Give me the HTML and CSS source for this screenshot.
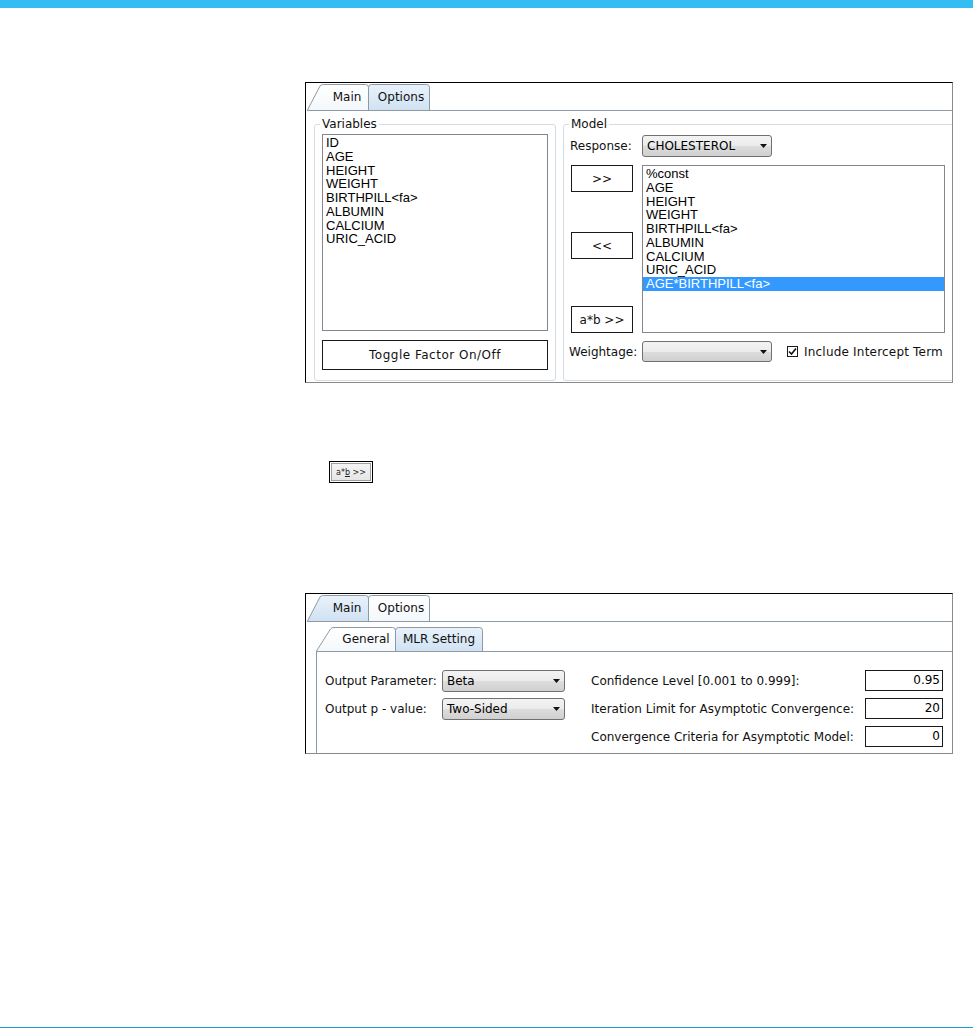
FILE: index.html
```html
<!DOCTYPE html>
<html>
<head>
<meta charset="utf-8">
<title>Model dialog</title>
<link rel="stylesheet" href="styles.css">
</head>
<body>
<svg class="defs" width="0" height="0" aria-hidden="true">
  <defs>
    <linearGradient id="gSel" x1="0" y1="0" x2="0" y2="1">
      <stop offset="0" stop-color="#ffffff"/>
      <stop offset="1" stop-color="#f4f8fc"/>
    </linearGradient>
    <linearGradient id="gTab" x1="0" y1="0" x2="0" y2="1">
      <stop offset="0" stop-color="#e9f2fb"/>
      <stop offset="1" stop-color="#d0e2f3"/>
    </linearGradient>
  </defs>
</svg>
<div class="page">
  <div class="topbar"></div>
  <main class="content">

    <section class="shot shot1">
      <div class="tabstrip">
        <div class="tab tab-first w62">
          <svg class="tabbg" width="62" height="26"><path class="sel" d="M0.5 26 L13 2 Q14 0.5 16.5 0.5 L58.5 0.5 Q61.5 0.5 61.5 3.5 L61.5 26"/></svg>
          <span class="tablabel">Main</span>
        </div>
        <div class="tab tab-next w62">
          <svg class="tabbg" width="62" height="26"><path class="unsel" d="M0.5 26 L0.5 3.5 Q0.5 0.5 3.5 0.5 L58.5 0.5 Q61.5 0.5 61.5 3.5 L61.5 26"/></svg>
          <span class="tablabel">Options</span>
        </div>
      </div>
      <div class="body1">
        <fieldset class="grp grp-vars">
          <legend class="legend">Variables</legend>
          <div class="listbox vars-list">
            <div class="item">ID</div>
            <div class="item">AGE</div>
            <div class="item">HEIGHT</div>
            <div class="item">WEIGHT</div>
            <div class="item">BIRTHPILL&lt;fa&gt;</div>
            <div class="item">ALBUMIN</div>
            <div class="item">CALCIUM</div>
            <div class="item">URIC_ACID</div>
          </div>
          <div class="btn toggle">Toggle Factor On/Off</div>
        </fieldset>
        <fieldset class="grp grp-model">
          <legend class="legend legend-model">Model</legend>
          <div class="resp-row">
            <span class="lbl lbl-resp">Response:</span>
            <div class="combo c130"><span class="ctext">CHOLESTEROL</span><svg class="arrow" width="7" height="4"><path d="M0 0 H7 L3.5 4 Z"/></svg></div>
          </div>
          <div class="mid">
            <div class="btncol">
              <div class="btn mbtn">&gt;&gt;</div>
              <div class="btn mbtn mbtn2">&lt;&lt;</div>
              <div class="btn mbtn mbtn3">a*b &gt;&gt;</div>
            </div>
            <div class="listbox model-list">
              <div class="item">%const</div>
              <div class="item">AGE</div>
              <div class="item">HEIGHT</div>
              <div class="item">WEIGHT</div>
              <div class="item">BIRTHPILL&lt;fa&gt;</div>
              <div class="item">ALBUMIN</div>
              <div class="item">CALCIUM</div>
              <div class="item">URIC_ACID</div>
              <div class="item item-sel">AGE*BIRTHPILL&lt;fa&gt;</div>
            </div>
          </div>
          <div class="weight-row">
            <span class="lbl lbl-weight">Weightage:</span>
            <div class="combo c130 ch21"><span class="ctext"></span><svg class="arrow" width="7" height="4"><path d="M0 0 H7 L3.5 4 Z"/></svg></div>
            <span class="check"><svg width="9" height="9" viewBox="0 0 9 9"><path d="M1 4.5 L3.5 7 L8 1.5" fill="none" stroke="#111" stroke-width="1.6"/></svg></span>
            <span class="lbl lbl-check">Include Intercept Term</span>
          </div>
        </fieldset>
      </div>
    </section>

    <div class="mini"><span>a*<u>b</u> &gt;&gt;</span></div>

    <section class="shot shot2">
      <div class="tabstrip">
        <div class="tab tab-first w62">
          <svg class="tabbg" width="62" height="26"><path class="unsel" d="M0.5 26 L13 2 Q14 0.5 16.5 0.5 L58.5 0.5 Q61.5 0.5 61.5 3.5 L61.5 26"/></svg>
          <span class="tablabel">Main</span>
        </div>
        <div class="tab tab-next w62">
          <svg class="tabbg" width="62" height="26"><path class="sel" d="M0.5 26 L0.5 3.5 Q0.5 0.5 3.5 0.5 L58.5 0.5 Q61.5 0.5 61.5 3.5 L61.5 26"/></svg>
          <span class="tablabel">Options</span>
        </div>
      </div>
      <div class="body2">
        <div class="tabstrip inner-strip">
          <div class="tab itab itab-first w80">
            <svg class="tabbg" width="80" height="24"><path class="sel" d="M0.5 24 L14.5 2 Q15.5 0.5 18 0.5 L76.5 0.5 Q79.5 0.5 79.5 3.5 L79.5 24"/></svg>
            <span class="tablabel">General</span>
          </div>
          <div class="tab itab tab-next w88">
            <svg class="tabbg" width="88" height="24"><path class="unsel" d="M0.5 24 L0.5 3.5 Q0.5 0.5 3.5 0.5 L84.5 0.5 Q87.5 0.5 87.5 3.5 L87.5 24"/></svg>
            <span class="tablabel">MLR Setting</span>
          </div>
        </div>
        <div class="inner-panel">
          <div class="opt-grid">
            <span class="lbl">Output Parameter:</span>
            <div class="combo c123"><span class="ctext">Beta</span><svg class="arrow" width="7" height="4"><path d="M0 0 H7 L3.5 4 Z"/></svg></div>
            <span></span>
            <span class="lbl">Confidence Level [0.001 to 0.999]:</span>
            <div class="num">0.95</div>

            <span class="lbl">Output p - value:</span>
            <div class="combo c123"><span class="ctext">Two-Sided</span><svg class="arrow" width="7" height="4"><path d="M0 0 H7 L3.5 4 Z"/></svg></div>
            <span></span>
            <span class="lbl">Iteration Limit for Asymptotic Convergence:</span>
            <div class="num">20</div>

            <span></span>
            <span></span>
            <span></span>
            <span class="lbl">Convergence Criteria for Asymptotic Model:</span>
            <div class="num">0</div>
          </div>
        </div>
      </div>
    </section>

  </main>
  <div class="footline"></div>
</div>
</body>
</html>
```

FILE: styles.css
```css
* { box-sizing: border-box; }
html, body { margin: 0; padding: 0; background: #fff; }
body {
  font-family: "DejaVu Sans", Verdana, sans-serif;
  font-size: 12px;
  color: #111;
}
.defs { position: absolute; width: 0; height: 0; }

.page {
  width: 973px;
  height: 1029px;
  display: flex;
  flex-direction: column;
  overflow: hidden;
}
.topbar { flex: none; height: 8px; background: #33bdf2; }
.content {
  flex: 1;
  display: flex;
  flex-direction: column;
  align-items: flex-start;
  padding-left: 305px;
}
.footline { flex: none; height: 1px; margin-bottom: 1px; background: #1a9bd0; }

/* screenshot frame */
.shot {
  width: 648px;
  background: #fff;
  border: 1px solid #8a8a8a;
  border-top-color: #000;
  border-left-color: #000;
  padding: 1px 0 0 1px;
  overflow: hidden;
  display: flex;
  flex-direction: column;
}
.shot1 { margin-top: 74px; height: 301px; }
.shot2 { margin-top: 110px; height: 161px; }

/* tabs */
.tabstrip {
  flex: none;
  display: flex;
  align-items: flex-end;
  height: 27px;
  border-bottom: 1px solid #8d9aa5;
}
.tab {
  position: relative;
  height: 26px;
  display: flex;
  align-items: center;
  justify-content: center;
}
.tab-next { margin-left: -1px; }
.w62 { width: 62px; }
.w80 { width: 80px; }
.w88 { width: 88px; }
.tab-first { padding-left: 18px; }
.tab-first + .tab-next { padding-left: 4px; }
.tabbg { position: absolute; left: 0; top: 0; }
.tabbg path { stroke: #8d9aa5; stroke-width: 1; }
.tabbg path.sel { fill: url(#gSel); }
.tabbg path.unsel { fill: url(#gTab); }
.tablabel { position: relative; white-space: nowrap; color: #111; }

/* body of panel 1 */
.body1 {
  flex: 1;
  display: flex;
  gap: 7px;
  padding: 6px 0 1px 7px;
  min-height: 0;
}
.grp {
  margin: 0;
  min-width: 0;
  border: 1px solid #d3dde5;
  border-radius: 3px;
  padding: 3px 7px 0 7px;
}
.grp-vars { width: 242px; flex: none; }
.grp-model { flex: 1; margin-right: -8px; padding-left: 6px; }
.legend {
  padding: 0 2px;
  margin-left: -2px;
  line-height: 14px;
  font-size: 12px;
  color: #111;
}
.legend-model { margin-left: -1px; }

.listbox {
  border: 1px solid #82878f;
  background: #fff;
  padding: 1px 0 0 0;
  font-family: "Liberation Sans", Arial, sans-serif;
  font-size: 13px;
  color: #000;
  overflow: hidden;
}
.item { line-height: 13.75px; height: 13.75px; padding-left: 3px; white-space: nowrap; }
.item-sel { background: #3399ff; color: #fff; }
.vars-list { width: 226px; height: 197px; }
.model-list { width: 303px; height: 168px; }

.btn {
  display: flex;
  align-items: center;
  justify-content: center;
  background: #fff;
  border: 1px solid #1a1a1a;
  color: #111;
  white-space: nowrap;
}
.toggle { width: 226px; height: 30px; margin-top: 9px; letter-spacing: 0.5px; }

.resp-row { display: flex; align-items: flex-end; height: 23px; }
.lbl { white-space: nowrap; color: #111; }
.lbl-resp { width: 72px; align-self: center; padding-top: 1px; }

.combo {
  display: flex;
  align-items: center;
  height: 22px;
  border: 1px solid #707070;
  border-radius: 3px;
  background: linear-gradient(#f3f3f3 0%, #ebebeb 50%, #dddddd 51%, #d0d0d0 100%);
  padding-left: 4px;
}
.c130 { width: 130px; }
.c123 { width: 123px; }
.ch21 { height: 21px; }
.ctext { flex: 1; white-space: nowrap; color: #000; }
.arrow { flex: none; margin-right: 4px; }
.arrow path { fill: #111; }

.mid { display: flex; gap: 9px; margin-top: 8px; padding-left: 1px; height: 168px; }
.btncol { width: 62px; flex: none; display: flex; flex-direction: column; }
.mbtn { height: 27px; }
.mbtn2 { margin-top: 40px; }
.mbtn3 { margin-top: auto; }

.weight-row { display: flex; align-items: center; height: 21px; margin-top: 8px; }
.lbl-weight { width: 73px; margin-left: -1px; }
.check {
  width: 11px;
  height: 11px;
  margin-left: 15px;
  border: 1px solid #1a1a1a;
  background: #fff;
  display: flex;
  align-items: center;
  justify-content: center;
}
.lbl-check { margin-left: 6px; letter-spacing: 0.2px; }

/* mini button */
.mini {
  margin-top: 78px;
  margin-left: 24px;
  width: 44px;
  height: 22px;
  border: 1px solid #000;
  background: linear-gradient(#f6f6f6, #e4e4e4);
  box-shadow: inset 0 0 0 1px #ffffff, inset 0 0 0 2px #a0a0a0;
  display: flex;
  align-items: center;
  justify-content: center;
  font-size: 8px;
  color: #222;
}
.mini u { text-decoration-thickness: 1px; text-underline-offset: 1px; }

/* body of panel 2 */
.body2 {
  flex: 1;
  display: flex;
  flex-direction: column;
  padding: 5px 0 0 9px;
  min-height: 0;
}
.inner-strip { height: 25px; }
.itab { height: 24px; }
.itab-first { padding-left: 20px; }
.inner-panel {
  flex: 1;
  border-left: 1px solid #8d9aa5;
  padding: 18px 9px 0 8px;
}
.opt-grid {
  display: grid;
  grid-template-columns: 117px 123px 26px 1fr 78px;
  grid-auto-rows: 22px;
  row-gap: 6px;
  align-items: center;
}
.num {
  height: 21px;
  align-self: start;
  border: 1px solid #1a1a1a;
  background: #fff;
  text-align: right;
  padding-right: 2px;
  line-height: 19px;
  color: #000;
}
```
